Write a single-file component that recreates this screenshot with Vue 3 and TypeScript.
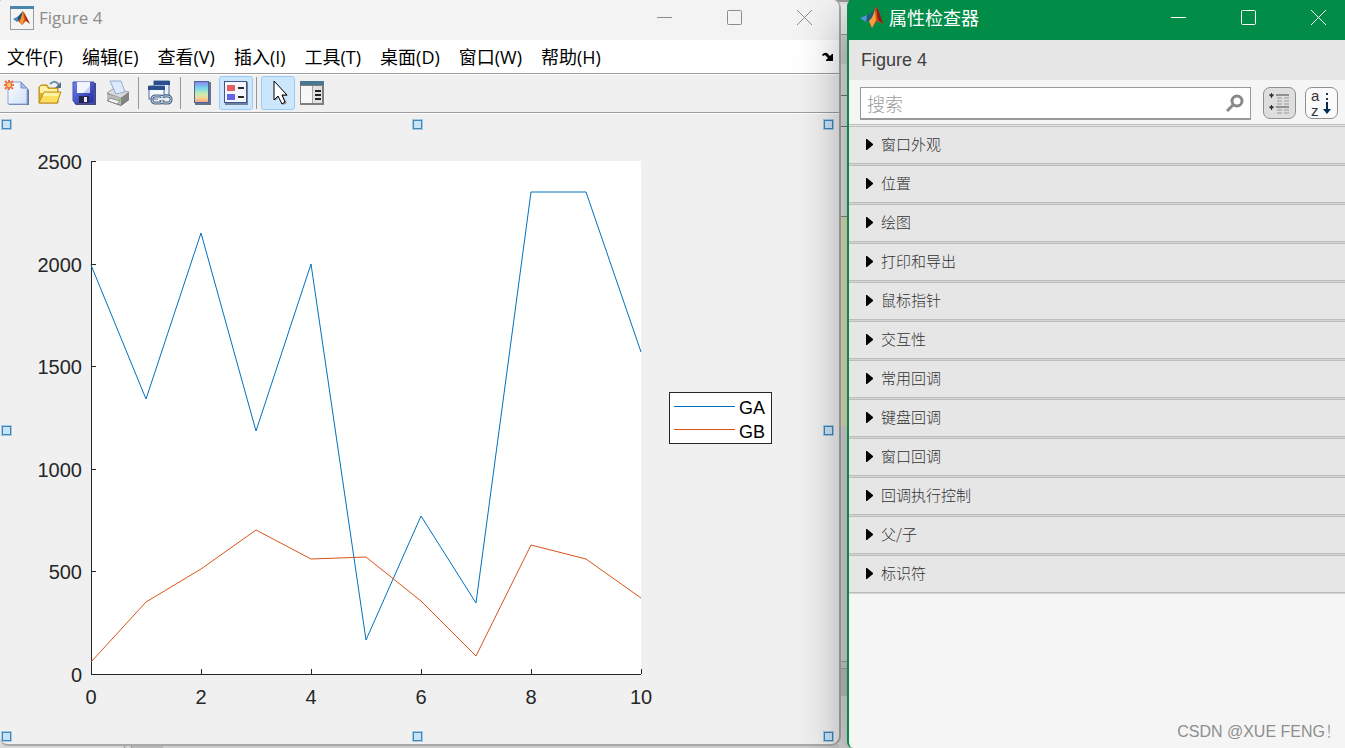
<script setup lang="ts">
import { computed, ref } from 'vue'

interface Series {
  name: string
  color: string
  values: number[]
}

const menus = ['文件(F)', '编辑(E)', '查看(V)', '插入(I)', '工具(T)', '桌面(D)', '窗口(W)', '帮助(H)']

const sections = [
  '窗口外观', '位置', '绘图', '打印和导出', '鼠标指针', '交互性',
  '常用回调', '键盘回调', '窗口回调', '回调执行控制', '父/子', '标识符',
]

const series: Series[] = [
  { name: 'GA', color: '#0072bd', values: [1995, 1338, 2147, 1182, 2000, 168, 768, 344, 2351, 2351, 1570] },
  { name: 'GB', color: '#d95319', values: [57, 353, 514, 700, 558, 568, 358, 90, 629, 558, 368] },
]

// Plot box inside the canvas
const plot = { left: 91, top: 47, width: 550, height: 513 }
const xTicks = [0, 2, 4, 6, 8, 10]
const yTicks = [0, 500, 1000, 1500, 2000, 2500]

const px = (x: number): number => Math.round(plot.left + (x / 10) * plot.width)
const py = (y: number): number => Math.round(plot.top + plot.height - (y / 2500) * plot.height)

const lines = computed(() =>
  series.map((s) => ({
    ...s,
    points: s.values.map((v, i) => `${px(i)},${py(v)}`).join(' '),
  })),
)

const handles = ['nw', 'n', 'ne', 'w', 'e', 'sw', 's', 'se']
const query = ref('')
</script>

<template>
  <div class="desktop">
    <section class="figure">
      <header class="titlebar">
        <svg class="app-icon" width="24" height="24" viewBox="0 0 24 24">
          <rect x="0.5" y="0.5" width="23" height="23" fill="#f4f4f4" stroke="#9b9b9b" />
          <rect x="0" y="0" width="24" height="3" fill="#4a86ad" />
          <path d="M3 13 L8 10.500 L11 13 L7 16 Z" fill="#3f86c6" />
          <path d="M8 10.500 L13 5 L11 13 L8 15 Z" fill="#27506f" />
          <path d="M13 5 L15 8 L20 18 L16 15 L12 19 L8 15 L11 12 Z" fill="#d9541e" />
          <path d="M13 6 L14 14 L12 19 L10 16 Z" fill="#f1a02e" />
          <path d="M14 7 L20 18 L16 14 Z" fill="#8c1f14" />
        </svg>
        <h1 class="title">Figure 4</h1>
        <div class="controls">
          <button type="button" aria-label="最小化"><svg width="17" height="17" viewBox="0 0 17 17"><path d="M1 8.500H16" /></svg></button>
          <button type="button" aria-label="最大化"><svg width="17" height="17" viewBox="0 0 17 17"><rect x="1.500" y="1.500" width="14" height="14" rx="1" /></svg></button>
          <button type="button" aria-label="关闭"><svg width="17" height="17" viewBox="0 0 17 17"><path d="M1 1L16 16M16 1L1 16" /></svg></button>
        </div>
      </header>

      <nav class="menubar">
        <button v-for="m in menus" :key="m" type="button">{{ m }}</button>
        <button type="button" class="dock" aria-label="停靠">
          <svg width="12" height="10" viewBox="0 0 12 10">
            <path d="M0 3 Q2 0 5 1 L8 4 L10 2 H11 V9 H4 V8 L6 6 L3 3 L1 4 Z" fill="#000" />
          </svg>
        </button>
      </nav>

      <div class="toolbar" role="toolbar">
        <button type="button" aria-label="新建图窗">
          <svg width="26" height="26" viewBox="0 0 26 26">
            <defs>
              <linearGradient id="page" x1="0" y1="0" x2="1" y2="1"><stop offset="0" stop-color="#fff" /><stop offset="1" stop-color="#cfe0f7" /></linearGradient>
            </defs>
            <path d="M5 25V3h13l7 7v15z" fill="#6478a8" />
            <path d="M4 24V2h13l6 6v16z" fill="url(#page)" stroke="#8ba6d8" />
            <path d="M17 2v6h6z" fill="#a9c3ee" stroke="#6f8cc4" />
            <path d="M5 0v10M0 5h10M1 1l8 8M9 1l-8 8" stroke="#ec7049" stroke-width="2" />
            <circle cx="5" cy="5" r="2" fill="#ffd95e" />
          </svg>
        </button>
        <button type="button" aria-label="打开文件">
          <svg width="26" height="26" viewBox="0 0 26 26">
            <path d="M2 23V7l2-2h6l2 3h9v15z" fill="#e4b229" stroke="#b98a1b" />
            <path d="M3 9V7l1-1h5l2 3h9v4H3z" fill="#fff2a8" />
            <path d="M2 23l5-11h17l-4 11z" fill="#fcdf60" stroke="#c0901d" />
            <path d="M7 13h15l-1 3H6z" fill="#fff3a6" />
            <path d="M13 4q5-5 9 1" fill="none" stroke="#7292ac" stroke-width="2" />
            <path d="M24 2v6h-6z" fill="#51718d" />
          </svg>
        </button>
        <button type="button" aria-label="保存图窗">
          <svg width="26" height="26" viewBox="0 0 26 26">
            <defs>
              <linearGradient id="disk" x1="0" y1="0" x2="1" y2="1"><stop offset="0" stop-color="#7185f0" /><stop offset="1" stop-color="#2029a0" /></linearGradient>
            </defs>
            <path d="M3 3h22v22H5l-2-2z" fill="#44487f" />
            <path d="M2 2h21v21H4l-2-2z" fill="url(#disk)" stroke="#4650b4" />
            <rect x="6" y="2" width="13" height="11" fill="#f2f5ff" />
            <path d="M12 13L19 6v7z" fill="#c6d0f5" />
            <rect x="8" y="16" width="10" height="7" fill="#22254d" />
            <rect x="13" y="17" width="3" height="5" fill="#e8eaf5" />
          </svg>
        </button>
        <button type="button" aria-label="打印图窗">
          <svg width="26" height="26" viewBox="0 0 26 26">
            <path d="M2 13l6-4 16 3v8l-8 6-14-5z" fill="#6d6d6d" />
            <path d="M2 13l6-4 16 3-8 6z" fill="#dcdcdc" stroke="#a5a5a5" />
            <path d="M5 1h11l4 11-9 2z" fill="#dbeafc" stroke="#91acd0" />
            <path d="M2 14l14 4v7L2 20z" fill="#bdbdbd" />
            <path d="M16 18l8-6v7l-8 6z" fill="#858585" />
            <path d="M5 18l10 3-3 3-9-3z" fill="#f2f2f2" stroke="#8b8b8b" />
            <path d="M14 19l2 1" stroke="#86d14c" stroke-width="2" />
          </svg>
        </button>
        <span class="sep"></span>
        <button type="button" aria-label="链接绘图">
          <svg width="26" height="26" viewBox="0 0 26 26">
            <rect x="7" y="1" width="15" height="14" fill="#e9f0fa" stroke="#4c6a9e" />
            <rect x="7" y="1" width="16" height="4" fill="#2c4e8f" />
            <rect x="2" y="6" width="15" height="13" fill="#f6f9fd" stroke="#4c6a9e" />
            <rect x="1" y="6" width="17" height="4" fill="#2c4e8f" />
            <rect x="5" y="16" width="11" height="7" rx="3" fill="none" stroke="#4d6785" stroke-width="3" />
            <rect x="14" y="16" width="10" height="7" rx="3" fill="none" stroke="#4d6785" stroke-width="3" />
            <rect x="5" y="16" width="11" height="7" rx="3" fill="none" stroke="#b9cbe0" />
            <rect x="14" y="16" width="10" height="7" rx="3" fill="none" stroke="#b9cbe0" />
            <path d="M11 19h8" stroke="#e3ecf6" stroke-width="2" />
          </svg>
        </button>
        <span class="sep"></span>
        <button type="button" aria-label="插入颜色栏">
          <svg width="26" height="26" viewBox="0 0 26 26">
            <defs>
              <linearGradient id="bar" x1="0" y1="0" x2="0" y2="1">
                <stop offset="0" stop-color="#8b7fe8" /><stop offset="0.300" stop-color="#79d4ee" />
                <stop offset="0.600" stop-color="#c8edb0" /><stop offset="0.800" stop-color="#f8d493" /><stop offset="1" stop-color="#ee9c86" />
              </linearGradient>
            </defs>
            <rect x="6" y="2" width="16" height="23" fill="#65728c" />
            <rect x="5.500" y="1.500" width="14" height="21" fill="url(#bar)" stroke="#4b659c" />
          </svg>
        </button>
        <button type="button" class="on" aria-pressed="true" aria-label="插入图例">
          <svg width="26" height="26" viewBox="0 0 26 26">
            <rect x="2" y="2" width="23" height="23" fill="#6f7f9e" />
            <rect x="1.500" y="1.500" width="22" height="21" fill="#f4f6fb" stroke="#3e5689" />
            <rect x="4" y="5" width="8" height="6" fill="#e36060" />
            <rect x="4" y="14" width="8" height="6" fill="#6464e6" />
            <path d="M15 8h6M15 17h6" stroke="#2a2a2a" stroke-width="2" />
          </svg>
        </button>
        <span class="sep"></span>
        <button type="button" class="on" aria-pressed="true" aria-label="编辑绘图">
          <svg width="26" height="26" viewBox="0 0 26 26">
            <path d="M10 2v19l4-4 4 8 4-2-4-7h5z" fill="#8a8f96" />
            <path d="M9 1v19l4-4 4 8 3-2-3-7h5z" fill="#fff" stroke="#000" />
          </svg>
        </button>
        <button type="button" aria-label="打开属性检查器">
          <svg width="26" height="26" viewBox="0 0 26 26">
            <rect x="1" y="2" width="24" height="23" fill="#7f7f7f" />
            <rect x="2" y="6" width="13" height="17" fill="#f7f7f7" />
            <rect x="14" y="6" width="9" height="17" fill="#e1e1e1" />
            <rect x="1" y="1" width="24" height="4" fill="#46788f" />
            <path d="M13.500 6v17" stroke="#a5a5a5" />
            <path d="M16 11h6M16 15h6M16 19h6" stroke="#222" stroke-width="2" />
          </svg>
        </button>
      </div>

      <div class="canvas">
        <svg class="chart" viewBox="0 0 839 630" preserveAspectRatio="xMinYMin meet" role="img" aria-label="GA / GB">
          <rect :x="plot.left" :y="plot.top" :width="plot.width" :height="plot.height" fill="#fff" />
          <g class="axis">
            <path :d="`M${plot.left} ${plot.top}V${plot.top + plot.height}H${plot.left + plot.width}`" />
            <path v-for="t in xTicks" :key="'x' + t" :d="`M${px(t)} ${py(0)}v-5`" />
            <path v-for="t in yTicks" :key="'y' + t" :d="`M${plot.left} ${py(t)}h5`" />
          </g>
          <g class="labels">
            <text v-for="t in xTicks" :key="'lx' + t" :x="px(t)" y="590" text-anchor="middle">{{ t }}</text>
            <text v-for="t in yTicks" :key="'ly' + t" :x="plot.left - 9" :y="py(t) + 8" text-anchor="end">{{ t }}</text>
          </g>
          <g class="curves">
            <polyline v-for="l in lines" :key="l.name" :points="l.points" :stroke="l.color" />
          </g>
          <g class="legend">
            <rect x="669" y="278" width="102" height="51" />
            <g v-for="(l, i) in lines" :key="'g' + l.name">
              <path :d="`M674 ${292 + i * 23}h61`" :stroke="l.color" />
              <text x="739" :y="300 + i * 24">{{ l.name }}</text>
            </g>
          </g>
        </svg>
        <span v-for="h in handles" :key="h" class="handle" :class="h"></span>
      </div>
    </section>

    <section class="inspector">
      <header class="titlebar">
        <svg class="app-icon" width="24" height="24" viewBox="0 0 24 24">
          <path d="M0 12 L7 9 L11 12 L6 16 Z" fill="#4a97d8" />
          <path d="M7 9 Q12 8 14 2 L12 13 L6 16 Z" fill="#225a78" />
          <path d="M16 0 Q18 3 23 18 L17 15 L12 22 L9 15 Q13 12 16 0 Z" fill="#d6481c" />
          <path d="M15 4 L16 14 L12 22 L9 15 Q13 12 15 4 Z" fill="#f2a33a" />
          <path d="M16 0 Q19 4 23 18 L18 14 Z" fill="#8a1f12" />
        </svg>
        <h2 class="title">属性检查器</h2>
        <div class="controls">
          <button type="button" aria-label="最小化"><svg width="17" height="17" viewBox="0 0 17 17"><path d="M1 8.500H16" /></svg></button>
          <button type="button" aria-label="最大化"><svg width="17" height="17" viewBox="0 0 17 17"><rect x="1.500" y="1.500" width="14" height="14" rx="1" /></svg></button>
          <button type="button" aria-label="关闭"><svg width="17" height="17" viewBox="0 0 17 17"><path d="M1 1L16 16M16 1L1 16" /></svg></button>
        </div>
      </header>
      <div class="target">Figure 4</div>
      <div class="filter">
        <label class="search">
          <input v-model="query" type="text" placeholder="搜索" aria-label="搜索" />
          <svg width="18" height="18" viewBox="0 0 18 18">
            <circle cx="11" cy="7" r="5" fill="none" stroke="#888" stroke-width="3" />
            <path d="M1 17l6-6" stroke="#888" stroke-width="3" />
          </svg>
        </label>
        <button type="button" class="mode pressed" aria-pressed="true" aria-label="按类别分组">
          <svg width="31" height="30" viewBox="0 0 31 30">
            <path d="M5 7h5M7.500 5v5M5 19h5M7.500 17v5" stroke="#333" stroke-width="1" />
            <path d="M6 7.500h3M6 19.500h3" stroke="#333" stroke-width="2" />
            <path d="M12 7h13M12 19h13" stroke="#444" stroke-width="1" />
            <path d="M13 10h5M20 10h5M13 13h5M20 13h5M13 16h5M20 16h5M13 22h5M20 22h5M13 25h5M20 25h5" stroke="#999" />
          </svg>
        </button>
        <button type="button" class="mode" aria-label="按字母排序">
          <svg width="31" height="30" viewBox="0 0 31 30">
            <text x="5" y="13">a</text>
            <text x="5" y="28">z</text>
            <path d="M21 5v2M21 10v2" stroke="#16395c" stroke-width="2" />
            <path d="M21 14v8" stroke="#032c50" stroke-width="2" />
            <path d="M17 21h8l-4 5z" fill="#032c50" />
          </svg>
        </button>
      </div>
      <ul class="sections">
        <li v-for="s in sections" :key="s">
          <button type="button" aria-expanded="false">
            <svg width="7" height="11" viewBox="0 0 7 11"><path d="M0 0h1l6 5v1l-6 5H0z" /></svg>
            <span>{{ s }}</span>
          </button>
        </li>
      </ul>
      <footer class="credit">CSDN @XUE FENG！</footer>
    </section>
  </div>
</template>

<style>
body {
  margin: 0;
  overflow: hidden;
}
</style>

<style scoped>
.desktop {
  display: grid;
  grid-template-columns: minmax(0, 841fr) minmax(0, 498fr);
  grid-template-rows: minmax(0, 1fr);
  gap: 6px;
  height: 100vh;
  font-family: "Open Sans", "Noto Sans CJK SC", sans-serif;
  background:
    linear-gradient(90deg, #d8d8d8 124px, #999 124px 125px, #d0d0d0 125px 131px, #999 131px 132px, #b8b8b8 132px 163px, #cdcdcd 163px) left bottom / 839px 4px no-repeat,
    linear-gradient(180deg, #999 2px, #e0e0e0 2px 4px, #eee 4px 34px, #999 34px 35px, #ddd 35px 36px, #d4d4d4 36px 64px, #e6e6e6 64px 95px, #777 95px 96px, #e8e8e8 96px 126px, #777 126px 127px, #ececec 127px 216px, #888 216px 217px, #e6e6c0 217px 426px, #dcdcdc 426px 661px, #a8a8a8 661px 662px, #d2d2d2 662px 668px, #a8a8a8 668px 669px, #c4c4c4 669px 696px, #dedede 696px);
}

button {
  padding: 0;
  border: 0;
  background: none;
  font: inherit;
  color: inherit;
}

button svg {
  display: block;
}

h1,
h2,
ul {
  margin: 0;
  padding: 0;
}

.figure {
  display: flex;
  flex-direction: column;
  margin-bottom: 2px;
  border: solid #a9a9a9;
  border-width: 0 2px 2px 0;
  border-radius: 2px 8px 10px 8px;
  background: #f0f0f0;
  overflow: hidden;
}

.titlebar {
  display: flex;
  align-items: center;
  flex: none;
  height: 40px;
  box-sizing: border-box;
  padding: 0 8px 5px 10px;
  background: #f3f3f3;
  color: #8c8c8c;
}

.app-icon {
  flex: none;
  margin-right: 5px;
}

.title {
  flex: 1;
  font-size: 17px;
  line-height: 24px;
  font-weight: 400;
}

.controls {
  display: flex;
  gap: 16px;
}

.controls button {
  display: flex;
  justify-content: center;
  width: 54px;
}

.controls svg {
  fill: none;
  stroke: currentColor;
}

.menubar {
  display: flex;
  align-items: center;
  flex: none;
  gap: 19px;
  height: 33px;
  padding: 0 5px 0 7px;
  background: #fff;
  border-bottom: 1px solid #9d9d9d;
  font-size: 18px;
  line-height: 24px;
  white-space: nowrap;
}

.dock {
  margin-left: auto;
}

.toolbar {
  display: flex;
  align-items: center;
  flex: none;
  height: 35px;
  padding-bottom: 2px;
  border-top: 1px solid #fff;
  border-bottom: 1px solid #9d9d9d;
}

.toolbar button {
  display: flex;
  align-items: center;
  justify-content: center;
  width: 34px;
  height: 34px;
  box-sizing: border-box;
  border: 1px solid transparent;
  border-radius: 3px;
}

.toolbar button:first-child {
  width: 33px;
}

.toolbar .on {
  background: #cce6fd;
  border-color: #99cdf9;
}

.sep {
  width: 1px;
  height: 32px;
  margin: 0 4px 0 3px;
  background: #979797;
}

.canvas {
  position: relative;
  flex: 1;
  min-height: 0;
  border-top: 1px solid #fff;
}

.chart {
  display: block;
  width: 100%;
  height: 100%;
}

.axis path {
  fill: none;
  stroke: #262626;
  shape-rendering: crispEdges;
}

.labels,
.legend text,
.mode text {
  font-family: "Liberation Sans", Arial, sans-serif;
}

.labels {
  font-size: 20px;
  fill: #262626;
}

.curves polyline {
  fill: none;
  stroke-width: 1;
}

.legend rect {
  fill: #fff;
  stroke: #262626;
  shape-rendering: crispEdges;
}

.legend path {
  shape-rendering: crispEdges;
}

.legend text {
  font-size: 18px;
}

.handle {
  position: absolute;
  width: 9px;
  height: 9px;
  box-sizing: border-box;
  border: 1px solid #3d85ba;
  background: #c6e3f8;
  box-shadow: 0 0 0 1px #a6c8e0;
}

.nw, .n, .ne { top: 6px; }
.w, .e { top: calc(50% - 3px); }
.sw, .s, .se { bottom: 3px; }
.nw, .w, .sw { left: 2px; }
.n, .s { left: calc(50% - 7px); }
.ne, .e, .se { right: 6px; }

.inspector {
  position: relative;
  display: flex;
  flex-direction: column;
  border-left: 2px solid #018c48;
  border-radius: 6px 0 0 6px;
  background: #f5f5f5;
  box-shadow: 0 20px 50px rgba(0, 0, 0, 0.4);
}

.inspector .titlebar {
  padding: 0 0 5px 11px;
  background: #018c48;
  color: #fff;
}

.inspector .title {
  font-size: 18px;
}

.target {
  flex: none;
  height: 40px;
  padding-left: 12px;
  background: #e6e6e6;
  color: #404040;
  font: 18px/40px "Liberation Sans", Arial, sans-serif;
}

.filter {
  display: flex;
  flex: none;
  height: 45px;
  box-sizing: border-box;
  padding: 7px 7px 4px 11px;
  border-bottom: 1px solid #bdbdbd;
}

.search {
  display: flex;
  align-items: center;
  flex: 1;
  height: 33px;
  box-sizing: border-box;
  margin-right: 12px;
  padding: 0 6px;
  border: 1px solid #999;
  border-bottom-width: 2px;
  background: #fff;
}

.search input {
  flex: 1;
  min-width: 0;
  padding: 0;
  border: 0;
  outline: 0;
  background: none;
  font: 300 18px/24px "Noto Sans CJK SC", sans-serif;
}

.search input::placeholder {
  color: #9a9a9a;
}

.mode {
  width: 33px;
  height: 32px;
  box-sizing: border-box;
  border: 1px solid #8f8f8f;
  border-radius: 7px;
  background: #fafafa;
}

.mode + .mode {
  margin-left: 9px;
}

.pressed {
  background: #dedede;
}

.mode text {
  font-size: 15px;
  fill: #333;
}

.sections {
  list-style: none;
  border-top: 1px solid #e6e6e6;
}

/* Each row ends in a lighter line that lies between two darker ones */
.sections li {
  padding-bottom: 1px;
  border-top: 1px solid #bdbdbd;
  background: #d4d4d4;
}

.sections button {
  display: flex;
  align-items: center;
  gap: 8px;
  width: 100%;
  height: 37px;
  box-sizing: border-box;
  padding: 0 0 2px 17px;
  border-bottom: 1px solid #bdbdbd;
  background: #e6e6e6;
  color: #333;
  font: 300 15px/20px "Noto Sans CJK SC", sans-serif;
}

.sections svg {
  fill: #000;
}

.credit {
  margin-top: auto;
  padding: 0 4px 5px 0;
  text-align: right;
  color: #8e8e8e;
  font: 300 16px/22px "Liberation Sans", "Noto Sans CJK SC", sans-serif;
}
</style>
